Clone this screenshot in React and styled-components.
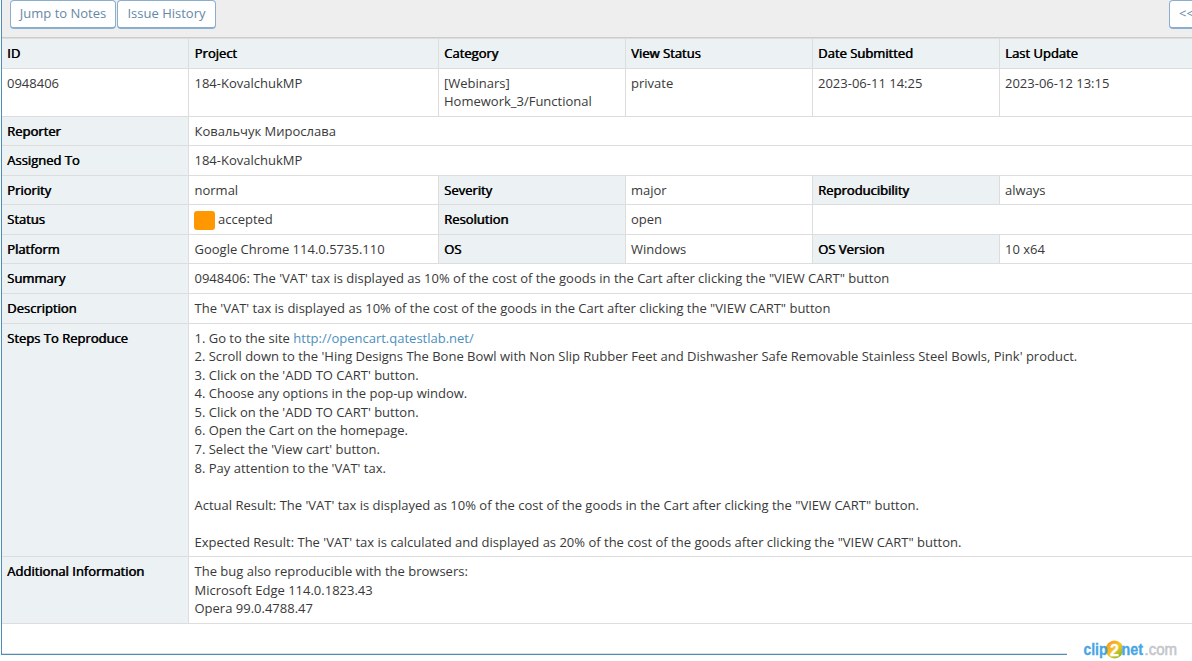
import React from "react";
import styled, { createGlobalStyle, css } from "styled-components";

const GlobalStyle = createGlobalStyle`
  * { box-sizing: border-box; }
  html, body { margin: 0; padding: 0; overflow: hidden; background: #fff; }
  body { font-family: "Open Sans", sans-serif; font-size: 13px; line-height: 18.57px; color: #393939; }
`;

const Page = styled.main`
  width: 1192px;
  height: 661px;
  overflow: hidden;
  display: flex;
  flex-direction: column;
`;

const Panel = styled.section`
  height: 655px;
  flex: none;
  border-left: 1px solid #4c8fbd;
  margin-left: 1px;
`;

const Toolbar = styled.header`
  height: 39px;
  display: flex;
  align-items: flex-start;
  gap: 1px;
  padding-left: 8px;
  background: #eee;
  border-bottom: 1px solid #ddd;
  box-shadow: inset 0 -1px #ccc;
`;

const ToolButton = styled.button`
  width: ${(p) => p.$width}px;
  height: 29px;
  flex: none;
  padding: 0 0 2px;
  border: 1px solid #8aafce;
  border-bottom-width: 2px;
  border-radius: 4px;
  background: #fff;
  color: #6688a6;
  font: 13px/18px "Open Sans", sans-serif;
  white-space: nowrap;
  margin-left: ${(p) => (p.$end ? "auto" : 0)};
  margin-right: ${(p) => (p.$end ? "-12px" : 0)};
`;

const Row = styled.div`
  display: grid;
  grid-template-columns: 187px 250px 187px 187px 187px 192px;
  height: ${(p) => p.$height}px;
  border-bottom: 1px solid #ddd;
`;

const Cell = styled.div`
  grid-column: span ${(p) => p.$span || 1};
  padding: ${(p) => (p.$tight ? 4.6 : 5)}px 0 0 5px;
  border-right: ${(p) => (p.$last ? "none" : "1px solid #ddd")};
  white-space: pre;

  &:nth-child(2) {
    padding-left: 5.5px;
  }

  ${(p) =>
    p.$label &&
    css`
      background: #ecf2f4;
      color: #000;
      text-shadow: 0.6px 0 0 #000;
    `}
`;

const Swatch = styled.span`
  display: inline-block;
  width: 21px;
  height: 19px;
  border-radius: 3px;
  background: #ff9800;
  vertical-align: top;
  margin: 1px 3px 0 -0.5px;
`;

const Link = styled.a`
  color: #4c8fbd;
  text-decoration: none;
`;

const Footer = styled.footer`
  height: 31px;
  display: flex;
  align-items: flex-end;
`;

const BottomRule = styled.div`
  width: 1065px;
  height: 2px;
  border-top: 1px solid #ddd;
  border-bottom: 1px solid #4c8fbd;
`;

const Brand = styled.svg`
  flex: none;
  width: 104px;
  height: 26px;
  margin: 0 0 -6px 12px;
`;

const steps = [
  "2. Scroll down to the 'Hing Designs The Bone Bowl with Non Slip Rubber Feet and Dishwasher Safe Removable Stainless Steel Bowls, Pink' product.",
  "3. Click on the 'ADD TO CART' button.",
  "4. Choose any options in the pop-up window.",
  "5. Click on the 'ADD TO CART' button.",
  "6. Open the Cart on the homepage.",
  "7. Select the 'View cart' button.",
  "8. Pay attention to the 'VAT' tax.",
  "",
  "Actual Result: The 'VAT' tax is displayed as 10% of the cost of the goods in the Cart after clicking the \"VIEW CART\" button.",
  "",
  "Expected Result: The 'VAT' tax is calculated and displayed as 20% of the cost of the goods after clicking the \"VIEW CART\" button.",
].join("\n");

const vat =
  "The 'VAT' tax is displayed as 10% of the cost of the goods in the Cart after clicking the \"VIEW CART\" button";

const browsers =
  "The bug also reproducible with the browsers:\nMicrosoft Edge 114.0.1823.43\nOpera 99.0.4788.47";

const headings = ["ID", "Project", "Category", "View Status", "Date Submitted", "Last Update"];
const values = [
  "0948406",
  "184-KovalchukMP",
  "[Webinars]\nHomework_3/Functional",
  "private",
  "2023-06-11 14:25",
  "2023-06-12 13:15",
];

function Wide({ label, height, tight, children }) {
  return (
    <Row $height={height}>
      <Cell $label>{label}</Cell>
      <Cell $span={5} $last $tight={tight}>{children}</Cell>
    </Row>
  );
}

export default function App() {
  return (
    <Page>
      <GlobalStyle />
      <Panel>
        <Toolbar>
          <ToolButton $width={106}>Jump to Notes</ToolButton>
          <ToolButton $width={99}>Issue History</ToolButton>
          <ToolButton $width={35} $end>&lt;&lt;</ToolButton>
        </Toolbar>
        <Row $height={30}>
          {headings.map((h, i) => <Cell key={h} $label $last={i === 5}>{h}</Cell>)}
        </Row>
        <Row $height={48}>
          {values.map((v, i) => <Cell key={v} $tight $last={i === 5}>{v}</Cell>)}
        </Row>
        <Wide label="Reporter" height={29}>Ковальчук Мирослава</Wide>
        <Wide label="Assigned To" height={30}>184-KovalchukMP</Wide>
        <Row $height={29}>
          <Cell $label>Priority</Cell>
          <Cell>normal</Cell>
          <Cell $label>Severity</Cell>
          <Cell>major</Cell>
          <Cell $label>Reproducibility</Cell>
          <Cell $last>always</Cell>
        </Row>
        <Row $height={30}>
          <Cell $label>Status</Cell>
          <Cell><Swatch />accepted</Cell>
          <Cell $label>Resolution</Cell>
          <Cell>open</Cell>
          <Cell $span={2} $last />
        </Row>
        <Row $height={29}>
          <Cell $label>Platform</Cell>
          <Cell>Google Chrome 114.0.5735.110</Cell>
          <Cell $label>OS</Cell>
          <Cell>Windows</Cell>
          <Cell $label>OS Version</Cell>
          <Cell $last>10 x64</Cell>
        </Row>
        <Wide label="Summary" height={30}>0948406: {vat}</Wide>
        <Wide label="Description" height={30}>{vat}</Wide>
        <Wide label="Steps To Reproduce" height={233} tight>
          1. Go to the site <Link>http://opencart.qatestlab.net/</Link>
          {"\n" + steps}
        </Wide>
        <Wide label="Additional Information" height={67}>{browsers}</Wide>
        <Footer>
          <BottomRule />
          <Brand viewBox="0 0 104 26">
            <defs>
              <linearGradient id="ball" x1="0" y1="0" x2="1" y2="1">
                <stop offset="0" stopColor="#ff8a1c" />
                <stop offset="0.5" stopColor="#f5c52a" />
                <stop offset="1" stopColor="#55b82e" />
              </linearGradient>
            </defs>
            <circle cx="35.5" cy="14.5" r="9" fill="url(#ball)" />
            <g fontFamily="Liberation Sans, Arial, sans-serif" fontSize="16">
              <text x="4.5" y="20" fontWeight="700" fill="#46a5e5" stroke="#46a5e5" strokeWidth="0.3" textLength="24" lengthAdjust="spacingAndGlyphs">clip</text>
              <text x="31" y="20.5" fontWeight="700" fill="#fff" stroke="#fff" strokeWidth="0.3" fontSize="16">2</text>
              <text x="42.5" y="20" fontWeight="700" fill="#46a5e5" stroke="#46a5e5" strokeWidth="0.3" textLength="21.5" lengthAdjust="spacingAndGlyphs">net</text>
              <text x="65.5" y="20" fill="#c5c6cb" stroke="#c5c6cb" strokeWidth="0.6" textLength="32.5" lengthAdjust="spacingAndGlyphs">.com</text>
            </g>
          </Brand>
        </Footer>
      </Panel>
    </Page>
  );
}
